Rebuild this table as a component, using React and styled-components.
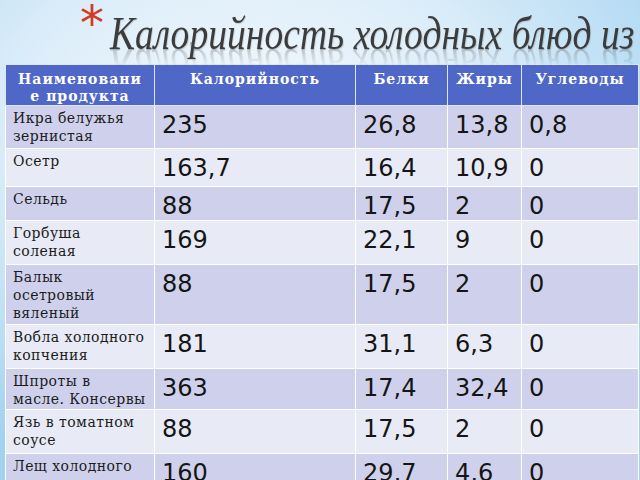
import React from 'react';
import styled, { createGlobalStyle } from 'styled-components';

const GlobalStyle = createGlobalStyle`
  html, body {
    margin: 0;
    padding: 0;
    overflow: hidden;
  }
`;

const Slide = styled.div`
  width: 640px;
  height: 480px;
  overflow: hidden;
  background: radial-gradient(ellipse 520px 360px at 250px 120px, #f4f9fd 0%, #dcedf9 45%, #b7dcf4 80%, #a3d1f0 100%);
  font-family: "DejaVu Serif", serif;
`;

const TitleRow = styled.div`
  height: 64px;
  display: flex;
  align-items: flex-start;
  padding-left: 80px;
`;

const Star = styled.span`
  font-family: "DejaVu Sans", sans-serif;
  font-size: 48px;
  line-height: 48px;
  color: #d23a22;
  margin-top: -1px;
  margin-right: 6px;
`;

const Title = styled.h1`
  margin: 0;
  padding-top: 10px;
  font-family: "Liberation Serif", serif;
  font-style: italic;
  font-weight: normal;
  font-size: 47px;
  line-height: 46px;
  white-space: nowrap;
  color: #3c3c3c;
  transform: scaleX(0.8);
  transform-origin: left top;
  text-shadow: 1px 1px 1px rgba(0, 0, 0, 0.15);
  -webkit-box-reflect: below -14px linear-gradient(transparent 55%, rgba(255, 255, 255, 0.35));
`;

const Table = styled.table`
  margin-left: 5px;
  width: 633px;
  border-collapse: collapse;
  table-layout: fixed;
`;

const Head = styled.th`
  background: #4f68c8;
  color: #ffffff;
  font-family: "DejaVu Serif", serif;
  font-weight: bold;
  font-size: 14px;
  line-height: 17px;
  letter-spacing: 1px;
  text-align: center;
  vertical-align: top;
  white-space: nowrap;
  padding: 6px 0 0;
  border: 1px solid #dfe4f6;
  height: 38px;
  box-sizing: border-box;
`;

const Row = styled.tr`
  background: ${(p) => (p.$odd ? '#cfd1ec' : '#e8eaf5')};
  height: ${(p) => p.$h}px;
`;

const Label = styled.td`
  font-family: "DejaVu Serif", serif;
  font-size: 14px;
  line-height: 18px;
  letter-spacing: 0.45px;
  color: #1c1c1c;
  vertical-align: top;
  white-space: nowrap;
  padding: 3px 0 0 7px;
  border: 1px solid #ffffff;
  overflow: hidden;
`;

const Line = styled.span`
  display: block;
`;

const Value = styled.td`
  font-family: "DejaVu Sans", sans-serif;
  font-size: 24px;
  line-height: 28px;
  color: #151515;
  vertical-align: top;
  padding: 5px 0 0 7px;
  border: 1px solid #ffffff;
  white-space: nowrap;
`;

const columns = [
  { title: ['Наименовани', 'е продукта'], width: 149 },
  { title: ['Калорийность'], width: 201 },
  { title: ['Белки'], width: 92 },
  { title: ['Жиры'], width: 74 },
  { title: ['Углеводы'], width: 117 },
];

const rows = [
  { name: ['Икра белужья', 'зернистая'], values: ['235', '26,8', '13,8', '0,8'], h: 43 },
  { name: ['Осетр'], values: ['163,7', '16,4', '10,9', '0'], h: 38 },
  { name: ['Сельдь'], values: ['88', '17,5', '2', '0'], h: 34 },
  { name: ['Горбуша', 'соленая'], values: ['169', '22,1', '9', '0'], h: 44 },
  { name: ['Балык', 'осетровый', 'вяленый'], values: ['88', '17,5', '2', '0'], h: 60 },
  { name: ['Вобла холодного', 'копчения'], values: ['181', '31,1', '6,3', '0'], h: 44 },
  { name: ['Шпроты в', 'масле. Консервы'], values: ['363', '17,4', '32,4', '0'], h: 41 },
  { name: ['Язь в томатном', 'соусе'], values: ['88', '17,5', '2', '0'], h: 44 },
  { name: ['Лещ холодного', 'копчения'], values: ['160', '29,7', '4,6', '0'], h: 44 },
];

export default function App() {
  return (
    <>
      <GlobalStyle />
      <Slide>
        <TitleRow>
          <Star>*</Star>
          <Title>Калорийность холодных блюд из</Title>
        </TitleRow>
        <Table>
          <colgroup>
            {columns.map((c) => (
              <col key={c.title[0]} style={{ width: c.width }} />
            ))}
          </colgroup>
          <thead>
            <tr>
              {columns.map((c) => (
                <Head key={c.title[0]}>
                  {c.title.map((t) => (
                    <Line key={t}>{t}</Line>
                  ))}
                </Head>
              ))}
            </tr>
          </thead>
          <tbody>
            {rows.map((r, i) => (
              <Row key={r.name.join(' ')} $odd={i % 2 === 0} $h={r.h}>
                <Label>
                  {r.name.map((t) => (
                    <Line key={t}>{t}</Line>
                  ))}
                </Label>
                {r.values.map((v, j) => (
                  <Value key={j}>{v}</Value>
                ))}
              </Row>
            ))}
          </tbody>
        </Table>
      </Slide>
    </>
  );
}
